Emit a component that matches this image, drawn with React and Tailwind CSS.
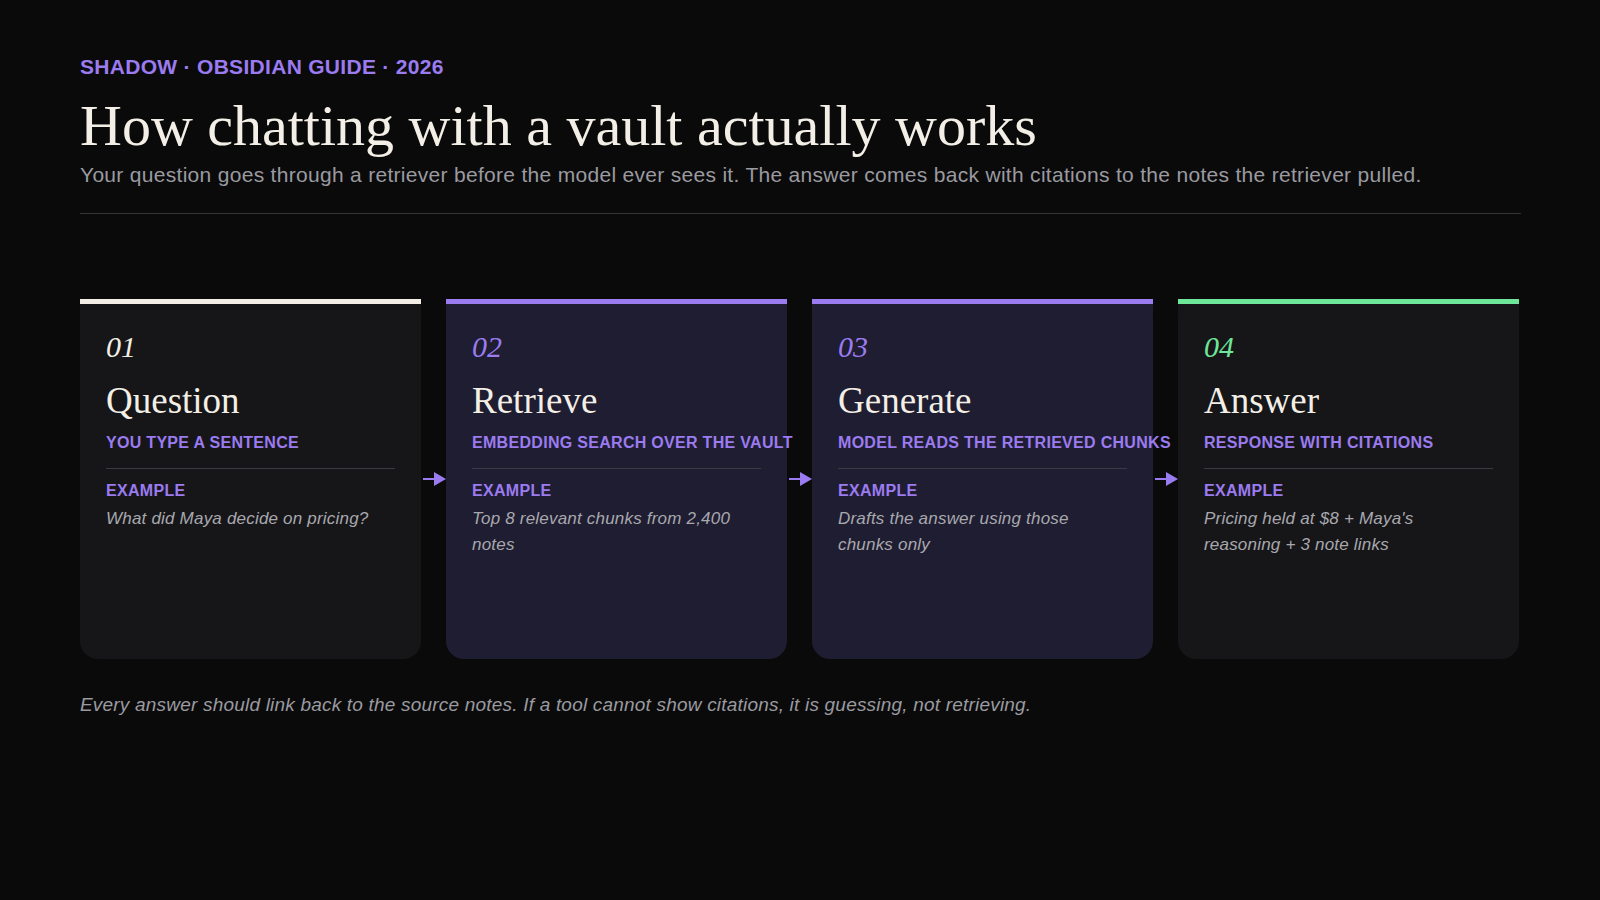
const steps = [
  { n: '01', title: 'Question', sub: 'YOU TYPE A SENTENCE', ex: 'What did Maya decide on pricing?', bar: 'bg-[#f3efe6]', bg: 'bg-[#161619]', num: 'text-[#f3efe6]' },
  { n: '02', title: 'Retrieve', sub: 'EMBEDDING SEARCH OVER THE VAULT', ex: 'Top 8 relevant chunks from 2,400 notes', bar: 'bg-[#9b7bf0]', bg: 'bg-[#1f1d31]', num: 'text-[#9b7bf0]' },
  { n: '03', title: 'Generate', sub: 'MODEL READS THE RETRIEVED CHUNKS', ex: 'Drafts the answer using those chunks only', bar: 'bg-[#9b7bf0]', bg: 'bg-[#1f1d31]', num: 'text-[#9b7bf0]' },
  { n: '04', title: 'Answer', sub: 'RESPONSE WITH CITATIONS', ex: 'Pricing held at $8 + Maya\'s reasoning + 3 note links', bar: 'bg-[#6ee79a]', bg: 'bg-[#161619]', num: 'text-[#6ee79a]' },
];

const serif = { fontFamily: '"Liberation Serif", "Times New Roman", serif' };

function Arrow() {
  return (
    <div className="w-[25px] flex items-center justify-center">
      <svg width="24" height="20" viewBox="0 0 24 20">
        <line x1="1" y1="10" x2="14" y2="10" stroke="#9b7bf0" strokeWidth="2" />
        <polygon points="12,3 24,10 12,17" fill="#9b7bf0" />
      </svg>
    </div>
  );
}

export default function App() {
  return (
    <div className="w-[1600px] h-[900px] bg-[#0a0a0b] px-[80px] pt-[56px] text-white" style={{ fontFamily: '"Liberation Sans", Arial, sans-serif' }}>
      <div className="text-[21px] font-bold text-[#9b7bf0] leading-none tracking-[0.3px]">SHADOW · OBSIDIAN GUIDE · 2026</div>
      <h1 className="text-[58px] leading-none mt-[20px] text-[#f3efe6]" style={serif}>How chatting with a vault actually works</h1>
      <p className="text-[21px] text-[#9a9aa0] mt-[4px] tracking-[0.3px]">Your question goes through a retriever before the model ever sees it. The answer comes back with citations to the notes the retriever pulled.</p>
      <div className="h-px bg-[#333338] mt-[22px] w-[1441px]" />
      <div className="flex mt-[85px] w-[1441px]">
        {steps.map((s, i) => (
          <div key={s.n} className="flex">
            {i > 0 && <Arrow />}
            <div className="w-[341px] flex flex-col">
              <div className={`h-[5px] ${s.bar}`} />
              <div className={`h-[355px] ${s.bg} rounded-[18px] rounded-t-none px-[26px] pt-[28px] relative`}>
                <div className={`absolute inset-x-0 top-0 h-[14px] ${s.bg} rounded-t-[14px]`} />
                <div className={`text-[30px] italic leading-none ${s.num}`} style={serif}>{s.n}</div>
                <div className="text-[37px] leading-none mt-[20px] text-[#f3efe6]" style={serif}>{s.title}</div>
                <div className="text-[16px] font-bold text-[#9b7bf0] mt-[16px] whitespace-nowrap leading-none tracking-[0.3px]">{s.sub}</div>
                <div className="h-px bg-[#3a3a42] mt-[17px]" />
                <div className="text-[16px] font-bold text-[#9b7bf0] mt-[14px] leading-none tracking-[0.3px]">EXAMPLE</div>
                <div className="text-[17px] italic text-[#a8a8ae] mt-[7px] leading-[26px] tracking-[0.2px]">{s.ex}</div>
              </div>
            </div>
          </div>
        ))}
      </div>
      <p className="text-[19px] italic text-[#9a9aa0] mt-[32px] tracking-[0.2px]">Every answer should link back to the source notes. If a tool cannot show citations, it is guessing, not retrieving.</p>
    </div>
  );
}
